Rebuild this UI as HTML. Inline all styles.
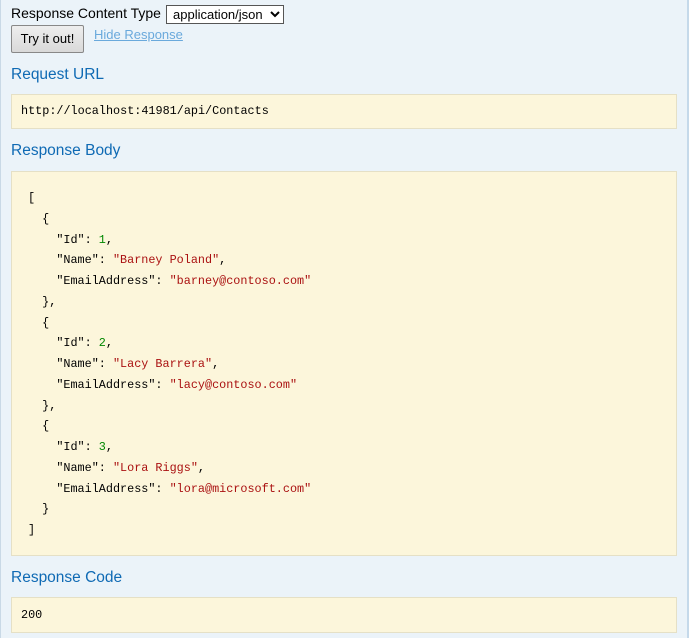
<!DOCTYPE html>
<html><head><style>
html,body{margin:0;padding:0;}
body{width:689px;height:638px;background:#ebf3f9;position:relative;overflow:hidden;font-family:"Liberation Sans",sans-serif;}
.lb{position:absolute;left:0;top:0;width:1px;height:638px;background:#c9d9e6;}
.rb{position:absolute;right:0;top:0;width:2px;height:638px;background:#c5d9ea;}
.t{position:absolute;font-size:14px;color:#000;}
select{position:absolute;left:166px;top:5px;width:118px;height:19px;font-family:"Liberation Sans",sans-serif;font-size:13px;border:1px solid #555;background:#fff;padding:0 2px;}
.btn{position:absolute;left:11px;top:25px;width:71px;height:26px;border:1px solid #888;background:linear-gradient(#eee,#d9d9d9);font-size:13px;line-height:26px;text-align:center;border-radius:2px;}
a{position:absolute;left:94px;top:27px;font-size:13px;color:#6aa9dc;text-decoration:underline;}
h4{position:absolute;left:11px;margin:0;font-weight:normal;font-size:15.5px;color:#0f6ab4;}
.box{position:absolute;left:11px;width:664px;background:#fcf6db;border:1px solid #e5e0c6;font-family:"Liberation Mono",monospace;font-size:11.8px;color:#000;}
pre{margin:0;font-family:"Liberation Mono",monospace;font-size:11.8px;line-height:20.75px;}
.s{color:#a11;}.n{color:#080;}
</style></head><body>
<div class="lb"></div><div class="rb"></div>
<div class="t" style="left:11px;top:5px;">Response Content Type</div>
<select><option>application/json</option></select>
<div class="btn">Try it out!</div>
<a>Hide Response</a>
<h4 style="top:66px;">Request URL</h4>
<div class="box" style="top:94px;height:33px;"><div style="position:absolute;left:9px;top:9px;">http://localhost:41981/api/Contacts</div></div>
<h4 style="top:142px;">Response Body</h4>
<div class="box" style="top:171px;height:383px;"><pre style="position:absolute;left:16px;top:16px;">[
  {
    "Id": <span class="n">1</span>,
    "Name": <span class="s">"Barney Poland"</span>,
    "EmailAddress": <span class="s">"barney@contoso.com"</span>
  },
  {
    "Id": <span class="n">2</span>,
    "Name": <span class="s">"Lacy Barrera"</span>,
    "EmailAddress": <span class="s">"lacy@contoso.com"</span>
  },
  {
    "Id": <span class="n">3</span>,
    "Name": <span class="s">"Lora Riggs"</span>,
    "EmailAddress": <span class="s">"lora@microsoft.com"</span>
  }
]</pre></div>
<h4 style="top:569px;">Response Code</h4>
<div class="box" style="top:597px;height:34px;"><div style="position:absolute;left:9px;top:10px;">200</div></div>
</body></html>
